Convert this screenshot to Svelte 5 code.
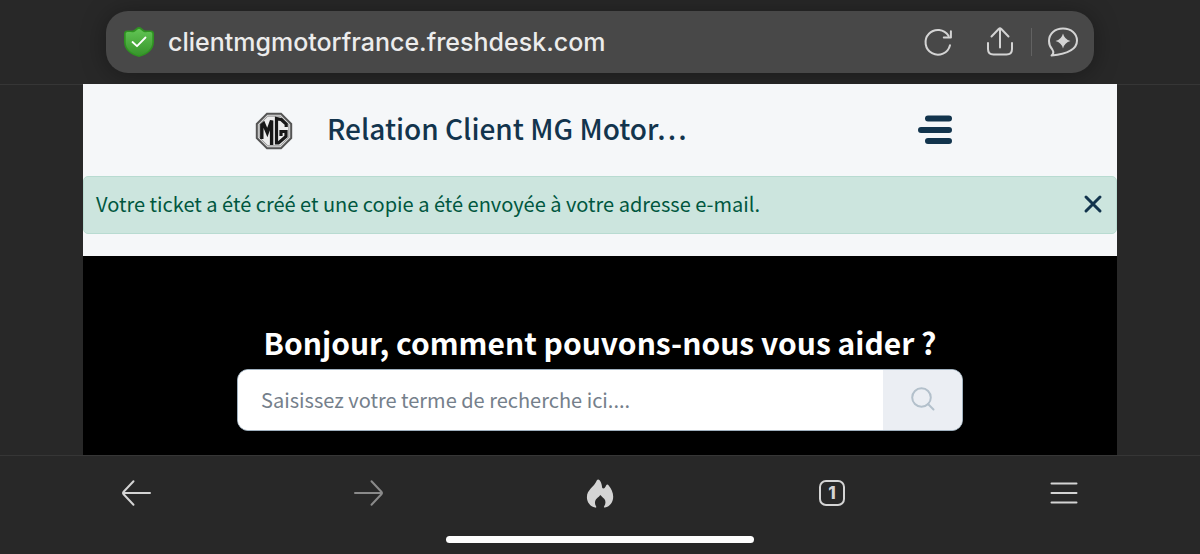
<script>
  let query = "";
  let showNotice = true;
</script>

<div class="browser">
  <header class="top">
    <div class="address">
      <svg class="shield" viewBox="0 0 30 30" aria-hidden="true">
        <defs>
          <linearGradient id="green" x1="0" y1="0" x2="0" y2="1">
            <stop offset="0" stop-color="#62c554" />
            <stop offset="1" stop-color="#37952b" />
          </linearGradient>
        </defs>
        <path d="M15 0C17 0 18 1.6 20 3C22 4.2 24 3.2 27 3.6C29 3.9 30 5 30 6.6V15C30 23 23 28 15 30C7 28 0 23 0 15V6.6C0 5 1 3.9 3 3.6C6 3.2 8 4.2 10 3C12 1.6 13 0 15 0Z" fill="#2f9222" />
        <path d="M15 1.8C16.5 2.2 17.5 4 19.8 4.9C22 5.7 24 4.8 26.5 5.1C27.8 5.3 28.3 6 28.3 7V15C28.3 22 22.5 26.6 15 28.5C7.5 26.6 1.7 22 1.7 15V7C1.7 6 2.2 5.3 3.5 5.1C6 4.8 8 5.7 10.2 4.9C12.5 4 13.5 2.2 15 1.8Z" fill="url(#green)" />
        <path d="M8.5 15L13 19.2L21.5 10.5" fill="none" stroke="#fff" stroke-width="1.8" stroke-linecap="round" stroke-linejoin="round" />
      </svg>
      <span class="url">clientmgmotorfrance.freshdesk.com</span>
      <div class="tools">
        <button aria-label="Actualiser">
          <svg viewBox="0 0 32 32">
            <path d="M28 19.2A12.4 12.4 0 1 1 26.5 9.8M28.9 5.2V11.5H21.8" />
          </svg>
        </button>
        <button aria-label="Partager">
          <svg viewBox="0 0 32 32">
            <path d="M16 21.5V2.5M7.5 10.5L14.7 3Q16 1.8 17.3 3L24.5 10.5M4 17V23Q4 28.5 9.5 28.5H22.5Q28 28.5 28 23V17" />
          </svg>
        </button>
        <span class="divider"></span>
        <button aria-label="Assistant">
          <svg viewBox="0 0 32 32">
            <path d="M4.5 29.5C7 27.5 7 26 5.4 23.7C3.2 21.2 2 18.4 2 15C2 7.6 8 2.5 16 2.5C24.2 2.5 30 7.6 30 14.5C30 24 20 28 4.5 29.5Z" />
            <path class="solid" d="M16 7.5Q17.5 13.5 23.5 15Q17.5 16.5 16 22.5Q14.5 16.5 8.5 15Q14.5 13.5 16 7.5Z" />
          </svg>
        </button>
      </div>
    </div>
  </header>

  <main class="page">
    <div class="portal-header">
      <a class="brand" href="/">
        <svg class="logo" viewBox="0 0 38 38" aria-hidden="true">
          <path d="M12 1.8H26L36.2 12V26L26 36.2H12L1.8 26V12Z" fill="#d6d6d6" stroke="#555" stroke-width="2" />
          <path d="M12.9 4.2H25.1L33.8 12.9V25.1L25.1 33.8H12.9L4.2 25.1V12.9Z" fill="#ececec" stroke="#999" stroke-width="1" />
          <path d="M6.8 27V13L8.6 11.5L12.3 20.5L16.6 8.5V33" fill="none" stroke="#171717" stroke-width="3.4" />
          <path d="M31.2 15V12.2L26.5 7.8L21.5 6.5V31L23.5 31L31 24.5V19.5H26V24" fill="none" stroke="#171717" stroke-width="3.2" />
        </svg>
        <span class="title">Relation Client MG Motor…</span>
      </a>
      <button class="menu" aria-label="Menu">
        <svg viewBox="0 0 36 32">
          <path d="M10 4.5H31M3 16H31M10 27H31" />
        </svg>
      </button>
    </div>

    <div class="notice-area">
      {#if showNotice}
        <div class="notice" role="status">
          <span>Votre ticket a été créé et une copie a été envoyée à votre adresse e-mail.</span>
          <button aria-label="Fermer" on:click={() => (showNotice = false)}>
            <svg viewBox="0 0 20 20"><path d="M3 3L17 17M17 3L3 17" /></svg>
          </button>
        </div>
      {/if}
    </div>

    <section class="hero">
      <h1>Bonjour, comment pouvons-nous vous aider ?</h1>
      <form class="search" on:submit|preventDefault>
        <input
          type="text"
          aria-label="Rechercher"
          placeholder="Saisissez votre terme de recherche ici...."
          bind:value={query}
        />
        <button aria-label="Lancer la recherche">
          <svg viewBox="0 0 24 24">
            <circle cx="10.5" cy="10.5" r="9.3" />
            <path d="M17 17L22.5 22.5" />
          </svg>
        </button>
      </form>
    </section>
  </main>

  <footer class="bottom">
    <nav>
      <button aria-label="Précédent">
        <svg viewBox="0 0 32 32"><path d="M30 16H3M13.5 4.2L3.4 15Q2.5 16 3.4 17L13.5 27.8" /></svg>
      </button>
      <button aria-label="Suivant" class="dim" disabled>
        <svg viewBox="0 0 32 32"><path d="M3 16H30M19.5 4.2L29.6 15Q30.5 16 29.6 17L19.5 27.8" /></svg>
      </button>
      <button aria-label="Effacer les données">
        <svg viewBox="0 0 32 32">
          <path class="solid" d="M12.9 3.2C13.5 2.1 14.8 2.1 15.6 3.2C17.5 5.6 17.9 8.2 18.1 10.6C18.5 11.8 20.2 11.8 20.8 10.7C21.5 9.7 21.8 8.9 22.2 8.2C22.8 7.3 24 7.4 24.7 8.4C27.3 11.8 29.2 15.4 29.2 19.8C29.2 25.2 26 29.6 21 30.6C20 30.7 19.6 30.2 20.2 29.3C22 26.6 21.8 23.6 20.2 21.8C19 20.4 18 20.2 17.1 18.8C16.7 18.2 16.1 18.2 15.7 18.8C14.6 20.4 13 20.9 11.9 22.6C10.6 24.7 10.7 27 12 29.3C12.6 30.3 12.2 30.8 11.2 30.6C6.2 29.4 2.9 25.2 2.9 20.2C2.9 12.4 9.8 10.6 12.9 3.2Z" />
        </svg>
      </button>
      <button aria-label="Onglets">
        <span class="tabs">1</span>
      </button>
      <button aria-label="Menu du navigateur">
        <svg viewBox="0 0 32 32"><path d="M3.5 6.5H28.5M3.5 16H28.5M3.5 25.5H28.5" /></svg>
      </button>
    </nav>
    <div class="home-bar"></div>
  </footer>
</div>

<style>
  :global(body) {
    margin: 0;
    background: #282828;
  }

  .browser {
    min-height: 100vh;
    display: flex;
    flex-direction: column;
    font-family: "Noto Sans CJK JP", "Noto Sans", sans-serif;
  }

  button {
    display: flex;
    align-items: center;
    justify-content: center;
    padding: 0;
    border: 0;
    background: none;
    cursor: pointer;
  }

  svg {
    display: block;
    fill: none;
    stroke-linecap: round;
    stroke-linejoin: round;
  }

  .top {
    padding: 11px 106px;
    border-bottom: 1px solid #363636;
  }

  .address {
    display: flex;
    align-items: center;
    box-sizing: border-box;
    height: 62px;
    padding: 0 15px 0 18px;
    border-radius: 22px;
    background: #484848;
    box-shadow: 0 2px 24px rgba(0, 0, 0, 0.35);
  }

  .shield {
    width: 30px;
    height: 30px;
  }

  .url {
    flex: 1;
    margin-left: 14px;
    font: 500 25px/32px Inter, sans-serif;
    color: #ececec;
  }

  .tools {
    display: flex;
    align-items: center;
  }

  .tools button {
    width: 32px;
    height: 32px;
    margin-left: 30px;
  }

  .tools svg,
  nav svg {
    width: 32px;
    height: 32px;
    stroke: #d4d4d4;
    stroke-width: 2;
  }

  .tools .divider {
    width: 1px;
    height: 28px;
    margin: 0 -15px 0 15px;
    background: #626262;
  }

  svg .solid {
    fill: #d4d4d4;
    stroke: none;
  }

  .page {
    flex: 1;
    display: flex;
    flex-direction: column;
    margin: 0 83px;
    margin-top: -1px;
    background: #f5f7f9;
  }

  .portal-header {
    display: flex;
    align-items: center;
    justify-content: space-between;
    height: 92px;
    padding: 0 163px 0 172px;
  }

  .brand {
    display: flex;
    align-items: flex-end;
    gap: 34px;
    height: 40px;
    text-decoration: none;
    color: #12344d;
  }

  .logo {
    width: 38px;
    height: 38px;
    stroke-linejoin: miter;
    stroke-linecap: butt;
  }

  .title {
    align-self: flex-start;
    font-size: 28px;
    font-weight: 500;
    line-height: 36px;
  }

  .menu svg {
    width: 36px;
    height: 32px;
    stroke: #12344d;
    stroke-width: 6;
  }

  .notice-area {
    min-height: 80px;
  }

  .notice {
    display: flex;
    align-items: center;
    justify-content: space-between;
    box-sizing: border-box;
    height: 58px;
    padding: 0 13px 3px 12px;
    border: 1px solid #b8dbd1;
    border-radius: 5px;
    background: #cce5de;
    color: #00573f;
    font-size: 20px;
    line-height: 32px;
  }

  .notice svg {
    width: 20px;
    height: 20px;
    stroke: #12344d;
    stroke-width: 3;
  }

  .hero {
    flex: 1;
    padding: 64px 154px 24px;
    background: #000;
  }

  h1 {
    margin: 0 0 5px;
    color: #fff;
    font-size: 30px;
    font-weight: 700;
    line-height: 44px;
    text-align: center;
  }

  .search {
    display: flex;
    box-sizing: border-box;
    height: 62px;
    border: 1px solid #9fb0be;
    border-radius: 11px;
    background: #fff;
    overflow: hidden;
  }

  .search input {
    flex: 1;
    min-width: 0;
    padding: 0 23px 2px;
    border: 0;
    outline: 0;
    background: #fff;
    color: #12344d;
    font-family: inherit;
    font-size: 20px;
  }

  .search input::placeholder {
    color: #75808b;
    opacity: 1;
  }

  .search button {
    width: 79px;
    padding-bottom: 3px;
    background: #ebeef3;
  }

  .search svg {
    width: 24px;
    height: 24px;
    stroke: #b3c0cb;
    stroke-width: 2;
  }

  .bottom {
    box-sizing: border-box;
    height: 100px;
    border-top: 1px solid #363636;
  }

  nav {
    display: flex;
    height: 74px;
    padding: 0 20px;
  }

  nav button {
    flex: 1;
  }

  .dim svg {
    stroke: #8a8a8a;
  }

  .tabs {
    box-sizing: border-box;
    width: 26px;
    height: 26px;
    border: 2px solid #d4d4d4;
    border-radius: 7px;
    color: #d4d4d4;
    font: 800 17px/22px Inter, sans-serif;
    text-align: center;
  }

  .home-bar {
    width: 308px;
    height: 7px;
    margin: 6px auto 0;
    border-radius: 4px;
    background: #fff;
  }
</style>
